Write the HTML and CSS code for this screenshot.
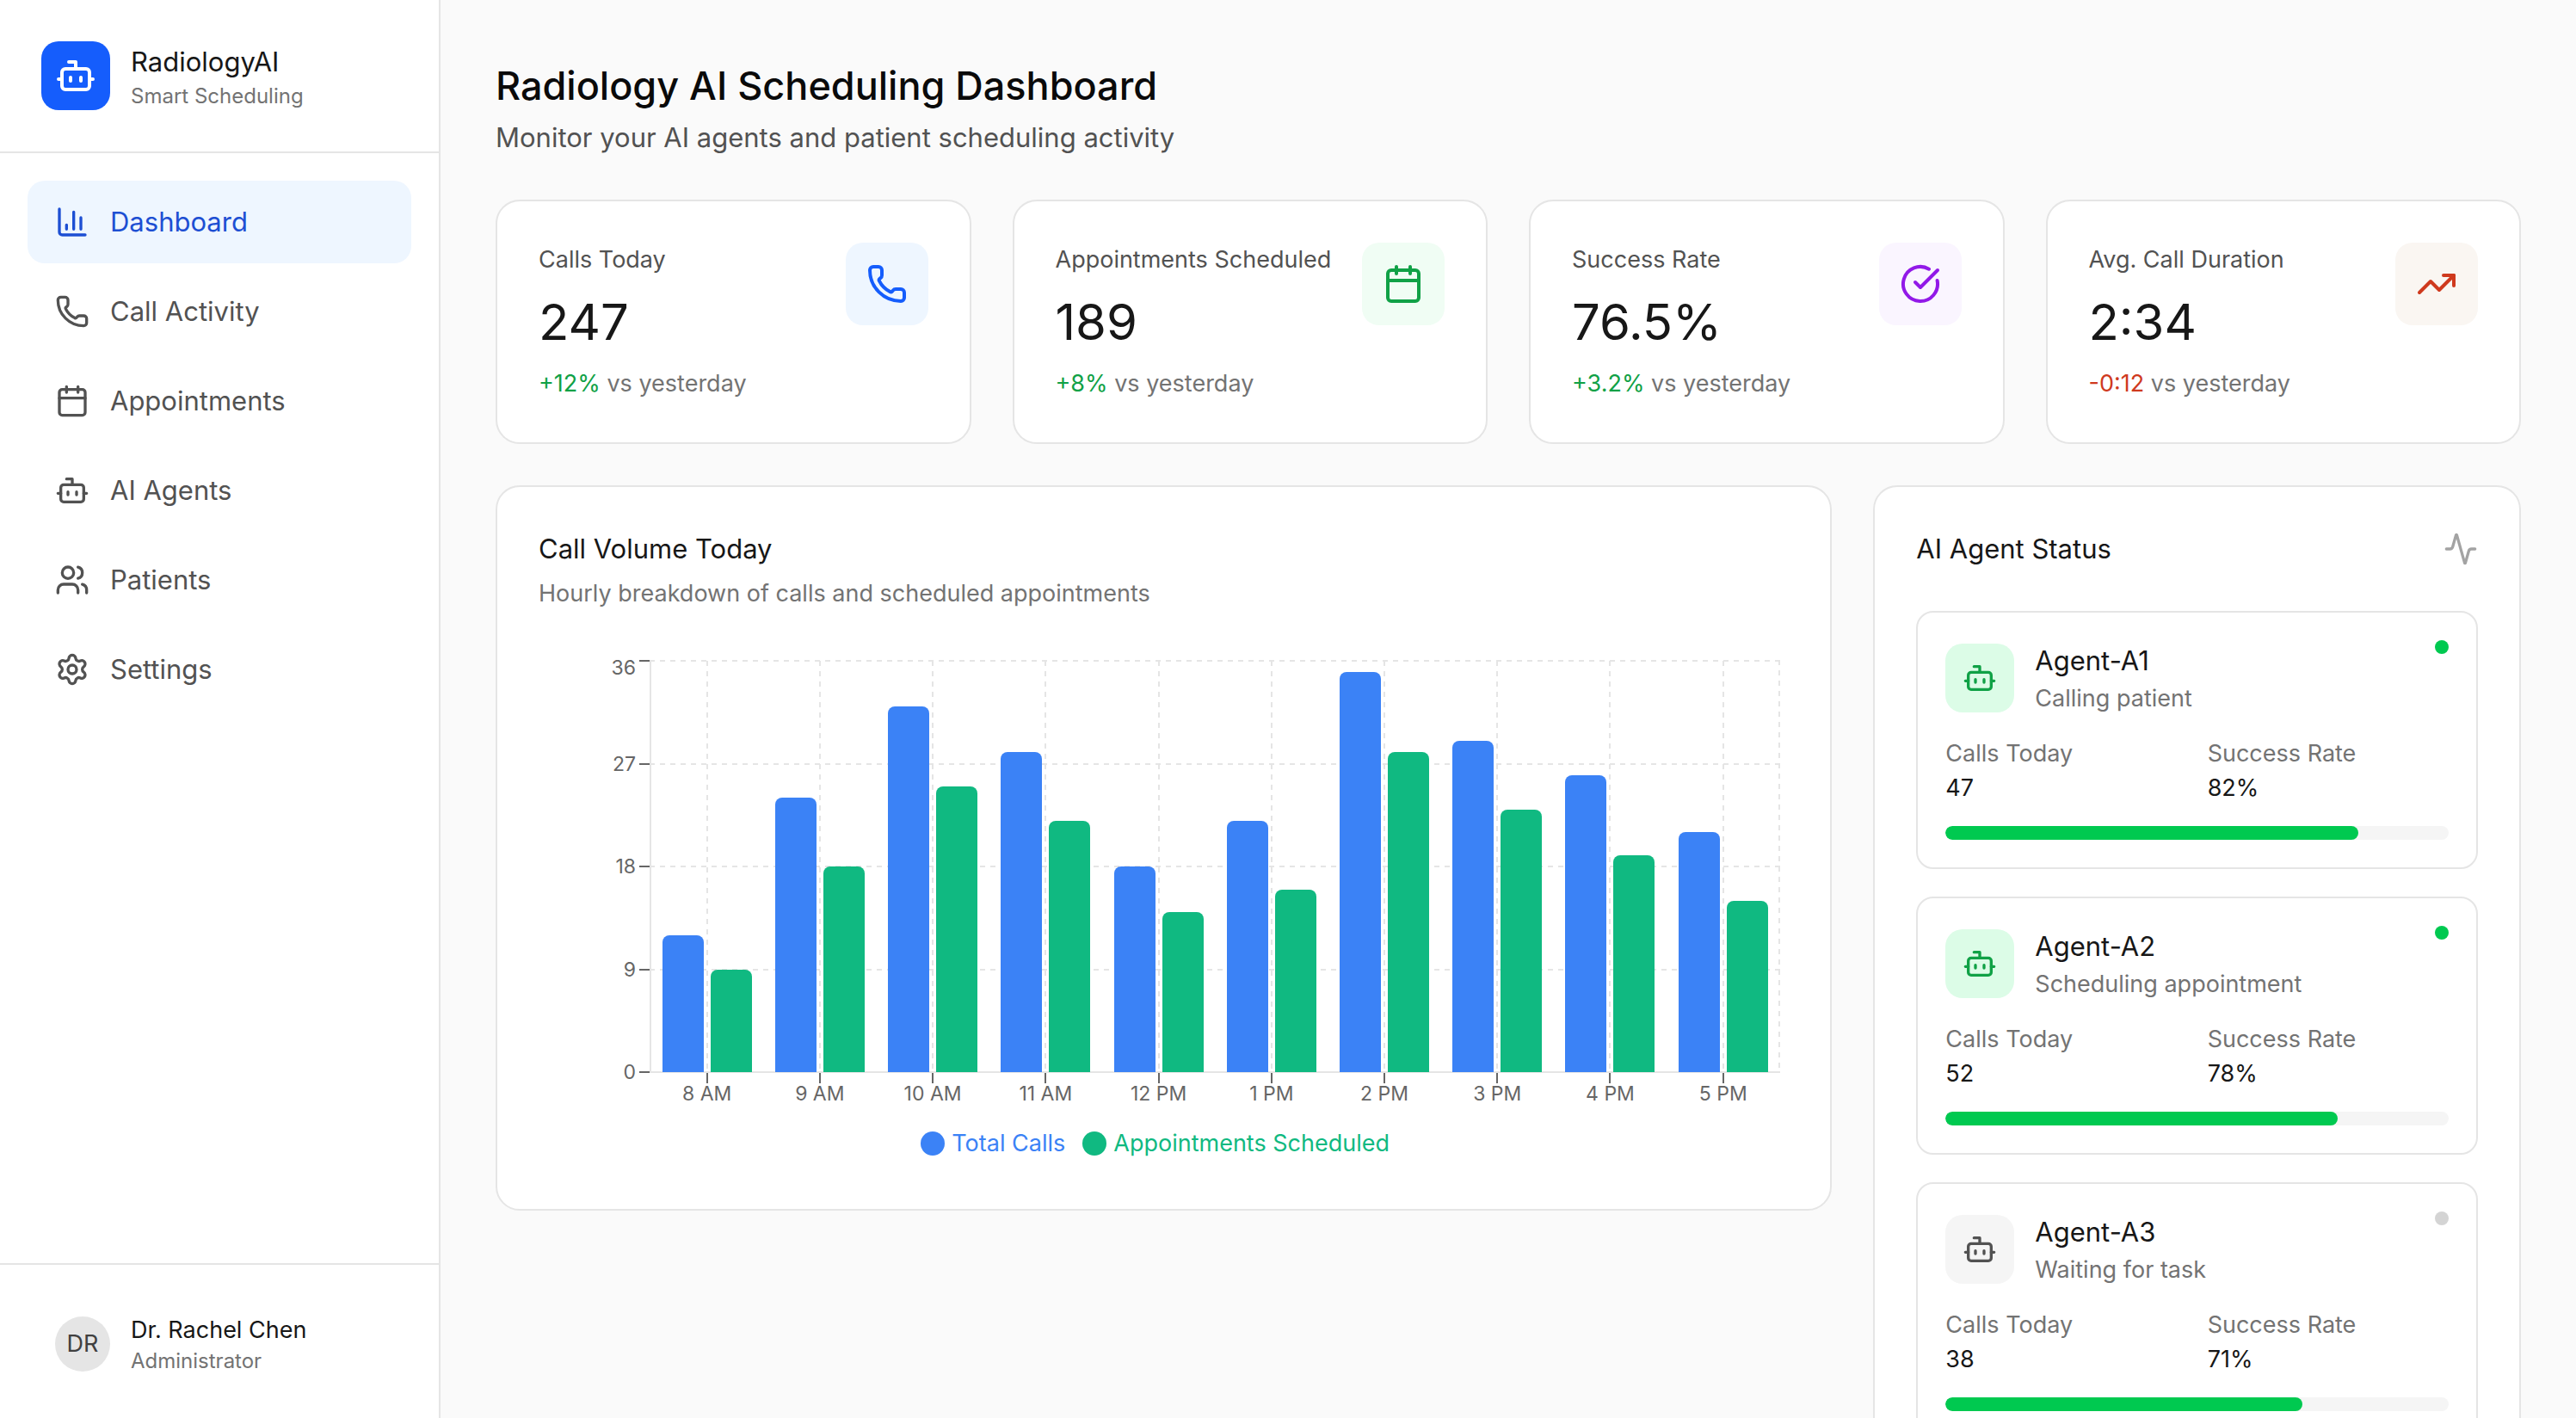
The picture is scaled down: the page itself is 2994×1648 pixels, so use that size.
FILE: index.html
```html
<!DOCTYPE html>
<html lang="en">
<head>
<meta charset="utf-8">
<meta name="viewport" content="width=device-width, initial-scale=1">
<title>RadiologyAI – Smart Scheduling</title>
<link rel="stylesheet" href="styles.css">
</head>
<body>
<svg class="sprite" aria-hidden="true">
  <symbol id="bot" viewBox="0 0 24 24"><path d="M12 8V4H8"/><rect width="16" height="12" x="4" y="8" rx="2"/><path d="M2 14h2M20 14h2M15 13v2M9 13v2"/></symbol>
  <symbol id="chart" viewBox="0 0 24 24"><path d="M3 3v16a2 2 0 0 0 2 2h16M18 17V9M13 17V5M8 17v-3"/></symbol>
  <symbol id="phone" viewBox="0 0 24 24"><path d="M13.832 16.568a1 1 0 0 0 1.213-.303l.355-.465A2 2 0 0 1 17 15h3a2 2 0 0 1 2 2v3a2 2 0 0 1-2 2A18 18 0 0 1 2 4a2 2 0 0 1 2-2h3a2 2 0 0 1 2 2v3a2 2 0 0 1-.8 1.6l-.468.351a1 1 0 0 0-.292 1.233 14 14 0 0 0 6.392 6.384"/></symbol>
  <symbol id="calendar" viewBox="0 0 24 24"><path d="M8 2v4M16 2v4"/><rect width="18" height="18" x="3" y="4" rx="2"/><path d="M3 10h18"/></symbol>
  <symbol id="users" viewBox="0 0 24 24"><path d="M16 21v-2a4 4 0 0 0-4-4H6a4 4 0 0 0-4 4v2"/><circle cx="9" cy="7" r="4"/><path d="M22 21v-2a4 4 0 0 0-3-3.87M16 3.13a4 4 0 0 1 0 7.75"/></symbol>
  <symbol id="settings" viewBox="0 0 24 24"><path d="M9.671 4.136a2.34 2.34 0 0 1 4.659 0 2.34 2.34 0 0 0 3.319 1.915 2.34 2.34 0 0 1 2.33 4.033 2.34 2.34 0 0 0 0 3.831 2.34 2.34 0 0 1-2.33 4.033 2.34 2.34 0 0 0-3.319 1.915 2.34 2.34 0 0 1-4.659 0 2.34 2.34 0 0 0-3.32-1.915 2.34 2.34 0 0 1-2.33-4.033 2.34 2.34 0 0 0 0-3.831A2.34 2.34 0 0 1 6.35 6.051a2.34 2.34 0 0 0 3.319-1.915"/><circle cx="12" cy="12" r="3"/></symbol>
  <symbol id="check" viewBox="0 0 24 24"><path d="M21.801 10A10 10 0 1 1 17 3.335"/><path d="m9 11 3 3L22 4"/></symbol>
  <symbol id="trend" viewBox="0 0 24 24"><path d="M16 7h6v6"/><path d="m22 7-8.5 8.5-5-5L2 17"/></symbol>
  <symbol id="activity" viewBox="0 0 24 24"><path d="M22 12h-2.48a2 2 0 0 0-1.93 1.46l-2.35 8.36a.25.25 0 0 1-.48 0L9.24 2.18a.25.25 0 0 0-.48 0l-2.35 8.36A2 2 0 0 1 4.49 12H2"/></symbol>
</svg>

<div class="app">
  <aside class="sidebar">
    <div class="brand">
      <span class="brand-logo"><svg class="icon icon-lg"><use href="#bot"/></svg></span>
      <div>
        <p class="text-md">RadiologyAI</p>
        <p class="text-xs muted">Smart Scheduling</p>
      </div>
    </div>
    <nav class="nav" aria-label="Main">
      <a class="nav-item active" href="#dashboard" aria-current="page"><svg class="icon"><use href="#chart"/></svg>Dashboard</a>
      <a class="nav-item" href="#calls"><svg class="icon"><use href="#phone"/></svg>Call Activity</a>
      <a class="nav-item" href="#appointments"><svg class="icon"><use href="#calendar"/></svg>Appointments</a>
      <a class="nav-item" href="#agents"><svg class="icon"><use href="#bot"/></svg>AI Agents</a>
      <a class="nav-item" href="#patients"><svg class="icon"><use href="#users"/></svg>Patients</a>
      <a class="nav-item" href="#preferences"><svg class="icon"><use href="#settings"/></svg>Settings</a>
    </nav>
    <div class="profile">
      <span class="avatar">DR</span>
      <div>
        <p class="text-sm">Dr. Rachel Chen</p>
        <p class="text-xs muted">Administrator</p>
      </div>
    </div>
  </aside>

  <main class="main">
    <header>
      <h1 class="page-title">Radiology AI Scheduling Dashboard</h1>
      <p class="page-subtitle">Monitor your AI agents and patient scheduling activity</p>
    </header>

    <section class="stats" aria-label="Key figures">
      <article class="card stat">
        <div>
          <h2 class="stat-label">Calls Today</h2>
          <p class="stat-value">247</p>
          <p class="text-sm muted"><span class="up">+12%</span> vs yesterday</p>
        </div>
        <span class="stat-icon blue"><svg class="icon icon-lg"><use href="#phone"/></svg></span>
      </article>
      <article class="card stat">
        <div>
          <h2 class="stat-label">Appointments Scheduled</h2>
          <p class="stat-value">189</p>
          <p class="text-sm muted"><span class="up">+8%</span> vs yesterday</p>
        </div>
        <span class="stat-icon green"><svg class="icon icon-lg"><use href="#calendar"/></svg></span>
      </article>
      <article class="card stat">
        <div>
          <h2 class="stat-label">Success Rate</h2>
          <p class="stat-value">76.5%</p>
          <p class="text-sm muted"><span class="up">+3.2%</span> vs yesterday</p>
        </div>
        <span class="stat-icon purple"><svg class="icon icon-lg"><use href="#check"/></svg></span>
      </article>
      <article class="card stat">
        <div>
          <h2 class="stat-label">Avg. Call Duration</h2>
          <p class="stat-value">2:34</p>
          <p class="text-sm muted"><span class="down">-0:12</span> vs yesterday</p>
        </div>
        <span class="stat-icon orange"><svg class="icon icon-lg"><use href="#trend"/></svg></span>
      </article>
    </section>

    <div class="panels">
      <section class="card volume">
        <h2 class="text-md">Call Volume Today</h2>
        <p class="volume-subtitle">Hourly breakdown of calls and scheduled appointments</p>
        <div class="chart">
          <div class="y-axis"><span>36</span><span>27</span><span>18</span><span>9</span><span>0</span></div>
          <div class="plot">
            <div class="bars">
              <div class="hour"><i class="bar calls" style="height:33.33%"></i><i class="bar booked" style="height:25%"></i></div>
              <div class="hour"><i class="bar calls" style="height:66.67%"></i><i class="bar booked" style="height:50%"></i></div>
              <div class="hour"><i class="bar calls" style="height:88.89%"></i><i class="bar booked" style="height:69.44%"></i></div>
              <div class="hour"><i class="bar calls" style="height:77.78%"></i><i class="bar booked" style="height:61.11%"></i></div>
              <div class="hour"><i class="bar calls" style="height:50%"></i><i class="bar booked" style="height:38.89%"></i></div>
              <div class="hour"><i class="bar calls" style="height:61.11%"></i><i class="bar booked" style="height:44.44%"></i></div>
              <div class="hour"><i class="bar calls" style="height:97.22%"></i><i class="bar booked" style="height:77.78%"></i></div>
              <div class="hour"><i class="bar calls" style="height:80.56%"></i><i class="bar booked" style="height:63.89%"></i></div>
              <div class="hour"><i class="bar calls" style="height:72.22%"></i><i class="bar booked" style="height:52.78%"></i></div>
              <div class="hour"><i class="bar calls" style="height:58.33%"></i><i class="bar booked" style="height:41.67%"></i></div>
            </div>
          </div>
          <div class="x-axis"><span>8 AM</span><span>9 AM</span><span>10 AM</span><span>11 AM</span><span>12 PM</span><span>1 PM</span><span>2 PM</span><span>3 PM</span><span>4 PM</span><span>5 PM</span></div>
        </div>
        <ul class="legend">
          <li class="legend-calls">Total Calls</li>
          <li class="legend-booked">Appointments Scheduled</li>
        </ul>
      </section>

      <section class="card agents">
        <div class="agents-head">
          <h2 class="text-md">AI Agent Status</h2>
          <svg class="icon faint"><use href="#activity"/></svg>
        </div>
        <article class="agent">
          <div class="agent-head">
            <span class="agent-icon on"><svg class="icon"><use href="#bot"/></svg></span>
            <div class="agent-name">
              <h3 class="text-md">Agent-A1</h3>
              <p class="text-sm muted">Calling patient</p>
            </div>
            <span class="dot on"></span>
          </div>
          <dl class="agent-stats">
            <div><dt>Calls Today</dt><dd>47</dd></div>
            <div><dt>Success Rate</dt><dd>82%</dd></div>
          </dl>
          <div class="meter"><div class="meter-fill" style="width:82%"></div></div>
        </article>
        <article class="agent">
          <div class="agent-head">
            <span class="agent-icon on"><svg class="icon"><use href="#bot"/></svg></span>
            <div class="agent-name">
              <h3 class="text-md">Agent-A2</h3>
              <p class="text-sm muted">Scheduling appointment</p>
            </div>
            <span class="dot on"></span>
          </div>
          <dl class="agent-stats">
            <div><dt>Calls Today</dt><dd>52</dd></div>
            <div><dt>Success Rate</dt><dd>78%</dd></div>
          </dl>
          <div class="meter"><div class="meter-fill" style="width:78%"></div></div>
        </article>
        <article class="agent">
          <div class="agent-head">
            <span class="agent-icon"><svg class="icon"><use href="#bot"/></svg></span>
            <div class="agent-name">
              <h3 class="text-md">Agent-A3</h3>
              <p class="text-sm muted">Waiting for task</p>
            </div>
            <span class="dot"></span>
          </div>
          <dl class="agent-stats">
            <div><dt>Calls Today</dt><dd>38</dd></div>
            <div><dt>Success Rate</dt><dd>71%</dd></div>
          </dl>
          <div class="meter"><div class="meter-fill" style="width:71%"></div></div>
        </article>
      </section>
    </div>
  </main>
</div>
</body>
</html>
```
FILE: styles.css
```css
:root {
  --ink: #171717;
  --body: #525252;
  --muted: #737373;
  --line: #e5e5e5;
  --calls: #3b82f6;
  --booked: #10b981;
  --green: #10a146;
}

*, *::before, *::after { box-sizing: border-box; }

body, h1, h2, h3, p, ul, dl, dd { margin: 0; padding: 0; }

h1, h2, h3 { font-weight: 400; }

body {
  font-family: Inter, "Liberation Sans", sans-serif;
  font-size: 31px;
  line-height: 48px;
  color: var(--ink);
  background: #fafafa;
}

.sprite { display: none; }

.icon {
  display: block;
  flex: none;
  width: 40px;
  height: 40px;
  fill: none;
  stroke: currentColor;
  stroke-width: 2;
  stroke-linecap: round;
  stroke-linejoin: round;
}

.icon-lg { width: 48px; height: 48px; }

.text-md { font-size: 31px; line-height: 48px; }
.text-sm { font-size: 27px; line-height: 40px; }
.text-xs { font-size: 24px; line-height: 32px; }
.muted { color: var(--muted); }
.faint { color: #a3a3a3; }

.app { display: flex; height: 100vh; }

/* Sidebar */
.sidebar {
  display: flex;
  flex: none;
  flex-direction: column;
  width: 512px;
  background: #fff;
  border-right: 2px solid var(--line);
}

.brand {
  display: flex;
  align-items: center;
  gap: 24px;
  padding: 48px;
  border-bottom: 2px solid var(--line);
}

.brand-logo {
  display: grid;
  place-items: center;
  width: 80px;
  height: 80px;
  border-radius: 20px;
  color: #fff;
  background: #155dfc;
}

.nav {
  display: flex;
  flex: 1;
  flex-direction: column;
  gap: 8px;
  padding: 32px;
}

.nav-item {
  display: flex;
  align-items: center;
  gap: 24px;
  padding: 24px 32px;
  border-radius: 20px;
  color: var(--body);
  text-decoration: none;
}

.nav-item.active { color: #1d4fd3; background: #eef6ff; }

.profile {
  display: flex;
  align-items: center;
  gap: 24px;
  padding: 56px 64px 50px;
  border-top: 2px solid var(--line);
}

.avatar {
  display: grid;
  place-items: center;
  width: 64px;
  height: 64px;
  border-radius: 50%;
  font-size: 27px;
  color: #404040;
  background: var(--line);
}

/* Main column */
.main {
  flex: 1;
  min-width: 0;
  padding: 64px;
  overflow-y: auto;
  scrollbar-width: none;
}

.page-title {
  font-size: 45px;
  font-weight: 500;
  line-height: 72px;
  color: #0a0a0a;
}

.page-subtitle { color: var(--body); }

.card {
  padding: 48px;
  border: 2px solid var(--line);
  border-radius: 28px;
  background: #fff;
}

.stats {
  display: grid;
  grid-template-columns: repeat(4, 1fr);
  gap: 48px;
  margin-top: 48px;
}

.stat {
  display: flex;
  align-items: flex-start;
  justify-content: space-between;
}

.stat-label { font-size: 27px; line-height: 40px; color: var(--body); }
.stat-value { margin: 16px 0; font-size: 58px; line-height: 72px; }
.up { color: var(--green); }
.down { color: #cf3a1e; }

.stat-icon {
  display: grid;
  flex: none;
  place-items: center;
  width: 96px;
  height: 96px;
  border-radius: 20px;
}

.blue { color: #155dfc; background: #eef6ff; }
.green { color: var(--green); background: #f0fdf4; }
.purple { color: #9219e8; background: #faf5ff; }
.orange { color: #cf3a1e; background: #faf6f2; }

.panels {
  display: grid;
  grid-template-columns: repeat(3, 1fr);
  align-items: start;
  gap: 48px;
  margin-top: 48px;
}

/* Call volume chart */
.volume { grid-column: span 2; }

.volume-subtitle {
  margin-top: 8px;
  font-size: 27px;
  line-height: 40px;
  color: var(--muted);
}

.chart {
  display: grid;
  grid-template-columns: 129px 1fr;
  margin: 57px 10px 0 0;
  font-size: 23px;
  line-height: 24px;
  color: #666;
}

.y-axis {
  display: flex;
  flex-direction: column;
  justify-content: space-between;
  margin: -11px 0;
  text-align: right;
}

.y-axis span {
  padding-right: 16px;
  background: linear-gradient(#666, #666) right center / 12px 2px no-repeat;
}

.y-axis span:first-child {
  height: 24px;
  padding-top: 8px;
}

.plot {
  height: 480px;
  padding: 1px;
  --dash: repeating-linear-gradient(to right, var(--line) 0 6px, transparent 6px 12px);
  background:
    linear-gradient(var(--line), var(--line)) 0 0 / 2px 100%,
    linear-gradient(var(--line), var(--line)) 0 100% / 100% 2px,
    repeating-linear-gradient(to bottom, var(--line) 0 6px, transparent 6px 12px) 100% 0 / 2px 100%,
    var(--dash) 0 0 / 100% 2px,
    var(--dash) 0 25% / 100% 2px,
    var(--dash) 0 50% / 100% 2px,
    var(--dash) 0 75% / 100% 2px;
  background-repeat: no-repeat;
}

.bars, .x-axis {
  display: grid;
  grid-template-columns: repeat(10, 1fr);
}

.bars { height: 100%; }

.hour {
  display: flex;
  align-items: flex-end;
  justify-content: center;
  gap: 8px;
  background: repeating-linear-gradient(to bottom, var(--line) 0 6px, transparent 6px 12px) center / 2px 100% no-repeat;
}

.bar { width: 48px; border-radius: 8px 8px 0 0; }
.calls { background: var(--calls); }
.booked { background: var(--booked); }

.x-axis {
  grid-column: 2;
  padding: 0 1px;
  text-align: center;
}

.x-axis span {
  padding-top: 12px;
  background: linear-gradient(#666, #666) top center / 2px 12px no-repeat;
}

.legend {
  display: flex;
  justify-content: center;
  gap: 20px;
  padding: 26px 20px 8px 0;
  font-size: 27px;
  line-height: 40px;
  list-style: none;
}

.legend li { display: flex; align-items: center; gap: 8px; }

.legend li::before {
  content: "";
  width: 28px;
  height: 28px;
  border-radius: 50%;
  background: currentColor;
}

.legend-calls { color: var(--calls); }
.legend-booked { color: var(--booked); }

/* Agents */
.agents {
  display: flex;
  flex-direction: column;
  gap: 32px;
}

.agents-head {
  display: flex;
  align-items: center;
  justify-content: space-between;
  margin-bottom: 16px;
}

.agent {
  padding: 32px;
  border: 2px solid var(--line);
  border-radius: 20px;
}

.agent-head { display: flex; align-items: center; gap: 24px; }
.agent-name { flex: 1; }

.agent-icon {
  display: grid;
  place-items: center;
  width: 80px;
  height: 80px;
  border-radius: 20px;
  color: var(--body);
  background: #f5f5f5;
}

.agent-icon.on { color: var(--green); background: #dcfce7; }

.dot {
  align-self: flex-start;
  width: 16px;
  height: 16px;
  border-radius: 50%;
  background: #d4d4d4;
}

.dot.on { background: #00c950; }

.agent-stats {
  display: grid;
  grid-template-columns: 1fr 1fr;
  gap: 24px;
  margin: 24px 0;
  font-size: 27px;
  line-height: 40px;
}

.agent-stats dt { color: var(--muted); }

.meter {
  height: 16px;
  border-radius: 8px;
  background: #f5f5f5;
  overflow: hidden;
}

.meter-fill {
  height: 100%;
  border-radius: 8px;
  background: #00c950;
}
```
